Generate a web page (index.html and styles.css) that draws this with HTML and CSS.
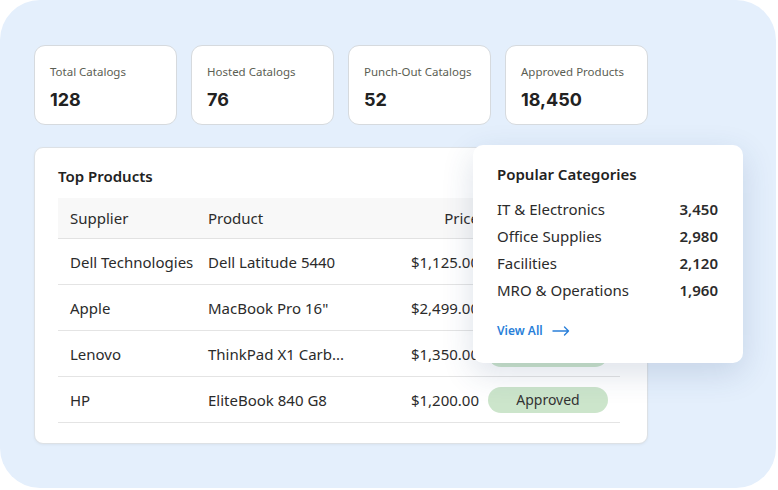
FILE: index.html
```html
<!DOCTYPE html>
<html lang="en">
<head>
  <meta charset="UTF-8">
  <meta name="viewport" content="width=device-width, initial-scale=1.0">
  <title>Catalog Overview</title>
  <link rel="stylesheet" href="styles.css">
</head>
<body>
  <div class="frame">
    <div class="stats">
      <div class="stat-card">
        <div class="stat-label">Total Catalogs</div>
        <div class="stat-value">128</div>
      </div>
      <div class="stat-card">
        <div class="stat-label">Hosted Catalogs</div>
        <div class="stat-value">76</div>
      </div>
      <div class="stat-card">
        <div class="stat-label">Punch-Out Catalogs</div>
        <div class="stat-value">52</div>
      </div>
      <div class="stat-card">
        <div class="stat-label">Approved Products</div>
        <div class="stat-value">18,450</div>
      </div>
    </div>

    <div class="products-card">
      <h3>Top Products</h3>
      <table class="products">
        <colgroup>
          <col class="col-supplier">
          <col class="col-product">
          <col class="col-price">
          <col class="col-status">
        </colgroup>
        <thead>
          <tr>
            <th>Supplier</th>
            <th>Product</th>
            <th class="price">Price</th>
            <th>Status</th>
          </tr>
        </thead>
        <tbody>
          <tr>
            <td>Dell Technologies</td>
            <td>Dell Latitude 5440</td>
            <td class="price">$1,125.00</td>
            <td><span class="badge">Approved</span></td>
          </tr>
          <tr>
            <td>Apple</td>
            <td>MacBook Pro 16"</td>
            <td class="price">$2,499.00</td>
            <td><span class="badge">Approved</span></td>
          </tr>
          <tr>
            <td>Lenovo</td>
            <td>ThinkPad X1 Carb...</td>
            <td class="price">$1,350.00</td>
            <td><span class="badge">Approved</span></td>
          </tr>
          <tr>
            <td>HP</td>
            <td>EliteBook 840 G8</td>
            <td class="price">$1,200.00</td>
            <td><span class="badge">Approved</span></td>
          </tr>
        </tbody>
      </table>
    </div>

    <div class="popup">
      <h3>Popular Categories</h3>
      <ul class="categories">
        <li><span>IT &amp; Electronics</span><strong>3,450</strong></li>
        <li><span>Office Supplies</span><strong>2,980</strong></li>
        <li><span>Facilities</span><strong>2,120</strong></li>
        <li><span>MRO &amp; Operations</span><strong>1,960</strong></li>
      </ul>
      <a class="view-all" href="#">View All
        <svg width="18" height="10" viewBox="0 0 18 10" fill="none" stroke="#2a7fd9" stroke-width="1.4" stroke-linecap="round" stroke-linejoin="round">
          <path d="M1 5h15.5M12.5 1l4 4-4 4"/>
        </svg>
      </a>
    </div>
  </div>
</body>
</html>
```

FILE: styles.css
```css
body {
  margin: 0;
  background: #ffffff;
  font-family: "Noto Sans", Arial, sans-serif;
  color: #2b2b2b;
}
.frame {
  position: relative;
  width: 776px;
  height: 488px;
  box-sizing: border-box;
  padding: 45px 34px 0;
  background: #e4effc;
  border-radius: 40px;
}
.stats {
  display: flex;
  gap: 14px;
}
.stat-card {
  width: 143px;
  height: 80px;
  box-sizing: border-box;
  padding: 18px 15px 0;
  background: #fff;
  border: 1px solid #d6dade;
  border-radius: 11px;
}
.stat-label {
  font-size: 11.5px;
  color: #5b5e53;
  line-height: 16px;
}
.stat-value {
  margin-top: 9px;
  font-family: Inter, Arial, sans-serif;
  font-size: 18px;
  font-weight: 700;
  color: #222;
  line-height: 22px;
}
.products-card {
  margin-top: 22px;
  width: 614px;
  height: 297px;
  box-sizing: border-box;
  padding: 18px 29px 0 23px;
  background: #fff;
  border: 1px solid #dde1e5;
  border-radius: 9px;
  box-shadow: 0 1px 3px rgba(0, 0, 0, 0.05);
}
.products-card h3,
.popup h3 {
  margin: 0;
  font-size: 15px;
  font-weight: 600;
  line-height: 20px;
  color: #222;
}
.products {
  margin-top: 12px;
  width: 562px;
  border-collapse: collapse;
  table-layout: fixed;
  font-size: 15px;
}
.col-supplier { width: 138px; }
.col-product { width: 160px; }
.col-price { width: 132px; }
.col-status { width: 132px; }
.products th {
  height: 40px;
  padding: 0 12px;
  text-align: left;
  font-weight: 400;
  background: #f8f8f8;
  border-bottom: 1px solid #e2e2e2;
}
.products td {
  height: 45px;
  padding: 0 12px;
  border-bottom: 1px solid #e4e4e4;
  white-space: nowrap;
}
.products .price {
  text-align: right;
  padding-right: 9px;
}
.products td:last-child {
  padding: 0;
}
.badge {
  display: block;
  width: 120px;
  height: 26px;
  line-height: 26px;
  text-align: center;
  background: #cce5cb;
  border-radius: 13px;
  font-size: 14px;
  color: #333;
}
.popup {
  position: absolute;
  left: 473px;
  top: 145px;
  width: 270px;
  height: 218px;
  box-sizing: border-box;
  padding: 19px 25px 0 24px;
  background: #fff;
  border-radius: 10px;
  box-shadow: 0 10px 32px rgba(40, 70, 120, 0.16);
}
.categories {
  list-style: none;
  margin: 12px 0 0;
  padding: 0;
  font-size: 15px;
}
.categories li {
  display: flex;
  justify-content: space-between;
  line-height: 27px;
  color: #2b2b2b;
}
.categories strong {
  font-weight: 600;
}
.view-all {
  display: inline-flex;
  align-items: center;
  gap: 9px;
  margin-top: 18px;
  font-size: 12px;
  font-weight: 600;
  color: #2a7fd9;
  text-decoration: none;
}
```
